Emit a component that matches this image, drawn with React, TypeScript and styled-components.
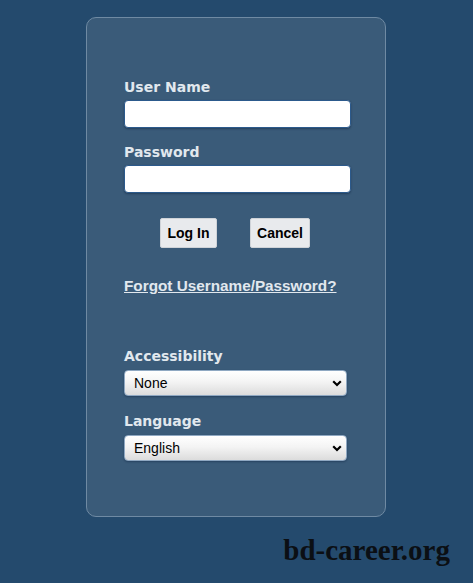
import styled, { createGlobalStyle } from 'styled-components';

const GlobalStyle = createGlobalStyle`
  html, body {
    margin: 0;
    padding: 0;
    background: #244a6d;
  }
  body {
    font-family: "DejaVu Sans", Verdana, sans-serif;
  }
`;

const Page = styled.div`
  width: 473px;
  height: 583px;
  padding-top: 17px;
  box-sizing: border-box;
  display: flex;
  flex-direction: column;
  align-items: center;
  overflow: hidden;
`;

const Card = styled.div`
  width: 300px;
  height: 500px;
  box-sizing: border-box;
  margin-right: 1px;
  padding: 60px 34px 0 37px;
  background: #3a5b79;
  border: 1px solid #6f8aa3;
  border-radius: 10px;
  display: flex;
  flex-direction: column;
`;

const Label = styled.label<{ $top?: number }>`
  display: block;
  margin-top: ${({ $top }) => ($top ? `${$top}px` : '0')};
  font-family: "DejaVu Sans", Verdana, sans-serif;
  font-weight: bold;
  font-size: 14px;
  line-height: 18px;
  color: #e1e8ee;
`;

const TextInput = styled.input`
  display: block;
  margin-top: 4px;
  width: 227px;
  height: 28px;
  box-sizing: border-box;
  border: 1px solid #2c5a8c;
  border-radius: 4px;
  background: #fff;
  box-shadow: 0 1px 2px rgba(10, 30, 60, 0.45);
  outline: none;
`;

const ButtonRow = styled.div`
  margin-top: 25px;
  padding-left: 36px;
  display: flex;
  gap: 33px;
`;

const Button = styled.button<{ $w: number }>`
  width: ${({ $w }) => $w}px;
  height: 30px;
  padding: 0;
  border: 1px solid #cfd3d8;
  border-radius: 2px;
  background: #e8eaed;
  font-family: "Liberation Sans", Arial, sans-serif;
  font-weight: bold;
  font-size: 14px;
  color: #000;
`;

const Forgot = styled.a`
  margin-top: 29px;
  align-self: flex-start;
  font-family: "Liberation Sans", Arial, sans-serif;
  font-weight: bold;
  font-size: 15.3px;
  line-height: 18px;
  color: #e1e8ee;
  text-decoration: underline;
  cursor: pointer;
`;

const SelectWrap = styled.div`
  position: relative;
  margin-top: 5px;
  width: 223px;
  height: 26px;
`;

const Select = styled.select`
  appearance: none;
  width: 100%;
  height: 100%;
  box-sizing: border-box;
  padding: 0 24px 0 9px;
  border: 1px solid #8fa8c2;
  border-radius: 4px;
  background: linear-gradient(#ffffff 0%, #f4f4f4 45%, #dcdcdc 100%);
  box-shadow: 0 1px 2px rgba(10, 30, 60, 0.4);
  font-family: "Liberation Sans", Arial, sans-serif;
  font-size: 14px;
  color: #000;
  outline: none;
`;

const Chevron = styled.svg`
  position: absolute;
  right: 5px;
  top: 10px;
  pointer-events: none;
`;

const Watermark = styled.div`
  align-self: flex-end;
  margin-top: 16px;
  margin-right: 23px;
  font-family: "Liberation Serif", "Times New Roman", serif;
  font-weight: bold;
  font-size: 29px;
  line-height: 34px;
  color: #0b0f14;
`;

const Dropdown = ({ options }: { options: string[] }) => (
  <SelectWrap>
    <Select defaultValue={options[0]}>
      {options.map((o) => (
        <option key={o}>{o}</option>
      ))}
    </Select>
    <Chevron width='10' height='7' viewBox='0 0 10 7'>
      <path d='M1.2 1.2 L5 5 L8.8 1.2' fill='none' stroke='#000' strokeWidth='2.2' />
    </Chevron>
  </SelectWrap>
);

const App = () => {
  return (
    <>
      <GlobalStyle />
      <Page>
        <Card>
          <Label>User Name</Label>
          <TextInput type='text' />
          <Label $top={15}>Password</Label>
          <TextInput type='password' />
          <ButtonRow>
            <Button $w={57}>Log In</Button>
            <Button $w={60}>Cancel</Button>
          </ButtonRow>
          <Forgot>Forgot Username/Password?</Forgot>
          <Label $top={52}>Accessibility</Label>
          <Dropdown options={['None', 'Screen Reader']} />
          <Label $top={16}>Language</Label>
          <Dropdown options={['English', 'Español', 'Français']} />
        </Card>
        <Watermark>bd-career.org</Watermark>
      </Page>
    </>
  );
};

export default App;
